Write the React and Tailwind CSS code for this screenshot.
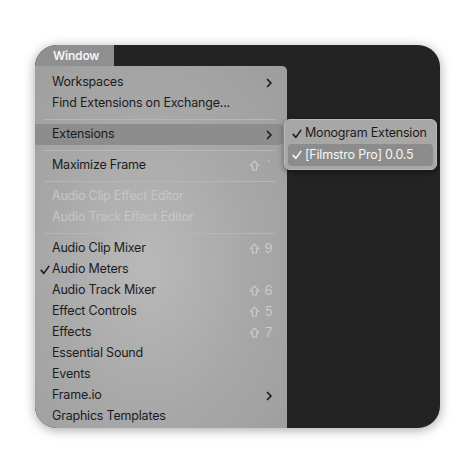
import React from "react";

const Chevron = () => (
  <svg width="7" height="10" viewBox="0 0 7 10" className="shrink-0">
    <path d="M1.5 1.5 L5 5 L1.5 8.5" fill="none" stroke="#1c1c1c" strokeWidth="1.7" strokeLinecap="round" strokeLinejoin="round" />
  </svg>
);

const Check = ({ color = "#1c1c1c" }) => (
  <svg width="10" height="10" viewBox="0 0 10 10" className="shrink-0">
    <path d="M1.2 5.4 L3.9 8.4 L8.8 1.4" fill="none" stroke={color} strokeWidth="1.6" strokeLinecap="round" strokeLinejoin="round" />
  </svg>
);

const Shift = () => (
  <svg width="11" height="11" viewBox="0 0 11 11" className="shrink-0">
    <path d="M5.5 1 L10 5.8 H7.5 V10 H3.5 V5.8 H1 Z" fill="none" stroke="#cbcbcb" strokeWidth="1.1" strokeLinejoin="round" />
  </svg>
);

const Sep = () => (
  <div className="h-[10px] flex items-center pl-[9px] pr-[12px]">
    <div className="h-px w-full bg-[#b6b6b6]" />
  </div>
);

function Item({ label, check, chevron, shortcut, disabled, active }) {
  return (
    <div
      className={
        "relative h-[21px] flex items-center pl-[17px] pr-[10px] mr-[4px] " +
        (active ? "bg-[#8d8d8d] rounded-r-[4px]" : "")
      }
    >
      {check && (
        <span className="absolute left-[5px] top-0 h-[21px] flex items-center">
          <Check />
        </span>
      )}
      <span className={"flex-1 whitespace-nowrap " + (disabled ? "text-[#c6c6c6]" : "text-[#1c1c1c]")}>{label}</span>
      {chevron && <Chevron />}
      {shortcut && (
        <span className="flex items-center gap-[4px] text-[#cbcbcb] text-[13px]">
          <Shift />
          <span className="w-[9px] text-center">{shortcut}</span>
        </span>
      )}
    </div>
  );
}

export default function App() {
  return (
    <div
      className="w-[474px] h-[474px] bg-white pt-[45px] pl-[35px]"
      style={{ fontFamily: "Inter, 'Liberation Sans', sans-serif" }}
    >
      <div className="w-[405px] h-[383px] rounded-[22px] overflow-hidden bg-[#232323] shadow-[0_2px_12px_rgba(0,0,0,0.35)] flex flex-col">
        <div className="h-[21px] flex shrink-0">
          <div className="w-[79px] bg-[#8f8f8f] text-[#f4f4f4] text-[12px] font-semibold tracking-[-0.2px] pl-[18px] flex items-center">
            Window
          </div>
        </div>
        <div className="relative flex-1 flex">
          <div className="w-[252px] h-full rounded-tr-[5px] pt-[6px] text-[12.5px] tracking-[-0.2px] bg-[radial-gradient(ellipse_at_45%_55%,#b9b9b9_0%,#a7a7a7_55%,#9d9d9d_100%)]">
            <Item label="Workspaces" chevron />
            <Item label="Find Extensions on Exchange..." />
            <Sep />
            <Item label="Extensions" chevron active />
            <Sep />
            <Item label="Maximize Frame" shortcut="`" />
            <Sep />
            <Item label="Audio Clip Effect Editor" disabled />
            <Item label="Audio Track Effect Editor" disabled />
            <Sep />
            <Item label="Audio Clip Mixer" shortcut="9" />
            <Item label="Audio Meters" check />
            <Item label="Audio Track Mixer" shortcut="6" />
            <Item label="Effect Controls" shortcut="5" />
            <Item label="Effects" shortcut="7" />
            <Item label="Essential Sound" />
            <Item label="Events" />
            <Item label="Frame.io" chevron />
            <Item label="Graphics Templates" />
          </div>
          <div className="absolute left-[249px] top-[53px] w-[153px] h-[51px] rounded-[6px] bg-[#a7a7a7] border border-[#b9b9b9] shadow-[0_2px_6px_rgba(0,0,0,0.4)] px-[3px] pt-[3px] text-[12.5px] tracking-[-0.2px]">
            <div className="h-[21px] flex items-center text-[#1c1c1c] whitespace-nowrap">
              <span className="w-[17px] pl-[4px] flex items-center"><Check /></span>
              <span>Monogram Extension</span>
            </div>
            <div className="h-[22px] flex items-center rounded-[4px] bg-[#8c8c8c] text-[#f7f7f7] whitespace-nowrap">
              <span className="w-[17px] pl-[4px] flex items-center"><Check color="#f7f7f7" /></span>
              <span>[Filmstro Pro] 0.0.5</span>
            </div>
          </div>
        </div>
      </div>
    </div>
  );
}
